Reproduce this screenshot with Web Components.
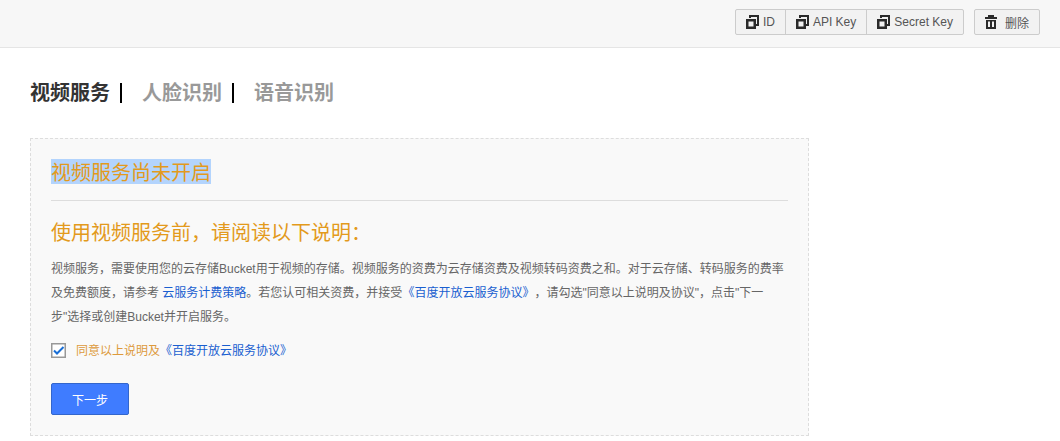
<!DOCTYPE html>
<html lang="zh">
<head>
<meta charset="utf-8">
<title>视频服务</title>
<style>
  html, body { margin: 0; padding: 0; background: #fff; }
  body { font-family: "Liberation Sans", "Noto Sans CJK SC", sans-serif; color: #666; height: 441px; overflow: hidden; text-spacing-trim: space-all; }
</style>
</head>
<body>
<top-bar>
  <btn-group>
    <icon-button icon="copy">ID</icon-button>
    <icon-button icon="copy">API Key</icon-button>
    <icon-button icon="copy">Secret Key</icon-button>
  </btn-group>
  <icon-button icon="trash" solo>删除</icon-button>
</top-bar>
<tab-nav>
  <tab-item active>视频服务</tab-item>
  <tab-item>人脸识别</tab-item>
  <tab-item last>语音识别</tab-item>
</tab-nav>
<notice-box>
  <span slot="title">视频服务尚未开启</span>
  <span slot="heading">使用视频服务前，请阅读以下说明：</span>
  视频服务，需要使用您的云存储Bucket用于视频的存储。视频服务的资费为云存储资费及视频转码资费之和。对于云存储、转码服务的费率及免费额度，请参考 <a>云服务计费策略</a>。若您认可相关资费，并接受<a>《百度开放云服务协议》</a>，请勾选"同意以上说明及协议"，点击"下一步"选择或创建Bucket并开启服务。
</notice-box>
<script>
  const ICONS = {
    copy: `<svg width="13" height="14" viewBox="0 0 13 14"><path fill="none" stroke="#2b2b2b" stroke-width="2.5" d="M1.250 5.250h7.500v7.500h-7.500z"/><path fill="none" stroke="#2b2b2b" stroke-width="2" d="M4 3V1h8v9h-2"/></svg>`,
    trash: `<svg width="12" height="14" viewBox="0 0 12 14"><path fill="#2b2b2b" fill-rule="evenodd" d="M0 2h12v2H0zM3 0h6v2H3zM1 5h10v9H1zM3 6.500v5.500h2V6.500zM7 6.500v5.500h2V6.500z"/></svg>`
  };

  class TopBar extends HTMLElement {
    constructor() {
      super();
      this.attachShadow({ mode: "open" });
      this.shadowRoot.innerHTML = `
        <style>
          :host {
            display: flex;
            justify-content: flex-end;
            gap: 10px;
            box-sizing: border-box;
            height: 48px;
            padding: 9px 20px 0 0;
            background: #f7f7f7;
            border-bottom: 1px solid #e5e5e5;
          }
        </style>
        <slot></slot>`;
    }
  }

  class BtnGroup extends HTMLElement {
    constructor() {
      super();
      this.attachShadow({ mode: "open" });
      this.shadowRoot.innerHTML = `
        <style>
          :host {
            display: flex;
            height: 26px;
            border: 1px solid #ccc;
            border-radius: 2px;
            box-sizing: border-box;
            background: #f2f2f2;
          }
          ::slotted(icon-button:not(:first-child)) { border-left: 1px solid #ccc; }
        </style>
        <slot></slot>`;
    }
  }

  class IconButton extends HTMLElement {
    constructor() {
      super();
      this.attachShadow({ mode: "open" });
      const solo = this.hasAttribute("solo");
      this.shadowRoot.innerHTML = `
        <style>
          :host {
            display: flex;
            align-items: center;
            gap: ${solo ? 8 : 4}px;
            box-sizing: border-box;
            height: ${solo ? "26px" : "24px"};
            padding: 0 10px;
            font-size: 12px;
            color: #555;
            ${solo ? "border: 1px solid #ccc; border-radius: 2px; background: #f2f2f2;" : ""}
          }
          svg { display: block; }
        </style>
        ${ICONS[this.getAttribute("icon")]}<slot></slot>`;
    }
  }

  class TabNav extends HTMLElement {
    constructor() {
      super();
      this.attachShadow({ mode: "open" });
      this.shadowRoot.innerHTML = `
        <style>
          :host { display: flex; padding: 33px 30px 0; height: 24px; margin-bottom: 33px; }
        </style>
        <slot></slot>`;
    }
  }

  class TabItem extends HTMLElement {
    constructor() {
      super();
      this.attachShadow({ mode: "open" });
      const last = this.hasAttribute("last");
      this.shadowRoot.innerHTML = `
        <style>
          :host {
            display: block;
            font-size: 20px;
            line-height: 24px;
            font-weight: bold;
            color: ${this.hasAttribute("active") ? "#333" : "#999"};
          }
          .wrap { display: flex; align-items: center; }
          i { display: block; width: 2px; height: 20px; background: #000; margin: 0 20px 0 10px; }
        </style>
        <div class="wrap"><slot></slot>${last ? "" : "<i></i>"}</div>`;
    }
  }

  class NoticeBox extends HTMLElement {
    constructor() {
      super();
      this.attachShadow({ mode: "open" });
      this.shadowRoot.innerHTML = `
        <style>
          :host {
            display: block;
            box-sizing: border-box;
            width: 779px;
            margin-left: 30px;
            padding: 20px;
            background: #f9f9f9;
            border: 1px dashed #ddd;
          }
          .title { height: 41px; border-bottom: 1px solid #ddd; font-size: 20px; color: #e39a1c; }
          .title ::slotted(span) { display: inline-block; height: 25px; line-height: 28px; background: #b3d4fd; }
          .heading { margin-top: 19px; font-size: 20px; line-height: 26px; color: #e39a1c; }
          .text { margin-top: 11px; font-size: 12px; line-height: 24px; color: #666; }
          ::slotted(a) { color: #1a5fd0; }
          .agree { display: flex; align-items: center; gap: 10px; margin-top: 13px; height: 16px; font-size: 12px; color: #dd9a3c; }
          .agree a { color: #1a5fd0; }
          .agree svg { display: block; }
          .agree span { position: relative; top: -1px; }
          button {
            display: block;
            width: 78px;
            height: 32px;
            margin-top: 25px;
            padding: 0;
            font: inherit;
            font-size: 12px;
            color: #fff;
            background: #3f7cff;
            border: 1px solid #3366cc;
            border-radius: 2px;
          }
        </style>
        <div class="title"><slot name="title"></slot></div>
        <div class="heading"><slot name="heading"></slot></div>
        <div class="text"><slot></slot></div>
        <div class="agree">
          <svg width="15" height="15" viewBox="0 0 15 15"><rect x=".75" y=".75" width="13.5" height="13.5" fill="#fff" stroke="#999" stroke-width="1.5"/><path d="M3 7.500l3 3 6.500-6.500" fill="none" stroke="#1a6fd6" stroke-width="2"/></svg>
          <span>同意以上说明及<a>《百度开放云服务协议》</a></span>
        </div>
        <button>下一步</button>`;
    }
  }

  customElements.define("top-bar", TopBar);
  customElements.define("btn-group", BtnGroup);
  customElements.define("icon-button", IconButton);
  customElements.define("tab-nav", TabNav);
  customElements.define("tab-item", TabItem);
  customElements.define("notice-box", NoticeBox);
</script>
</body>
</html>
